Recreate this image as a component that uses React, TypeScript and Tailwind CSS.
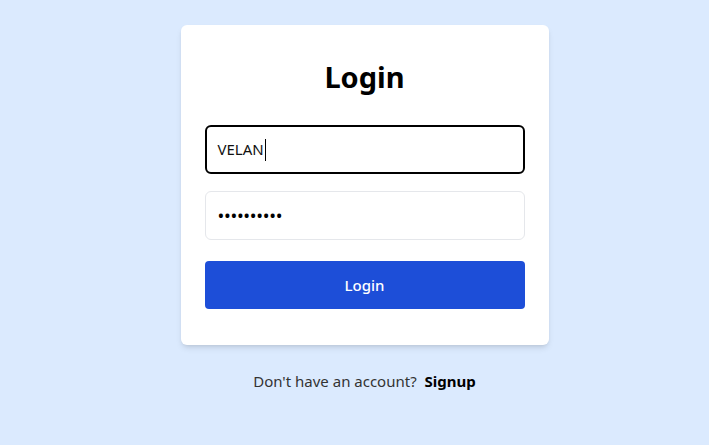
import React from "react";

export default function App() {
  return (
    <div className="min-h-[445px] w-full bg-[#dbeafe] flex flex-col items-center pt-[25px] pl-[20px]" style={{ fontFamily: '"Segoe UI", "Noto Sans", sans-serif' }}>
      <div className="w-[368px] bg-white rounded-md shadow-md px-6 pt-[40px] pb-[36px]">
        <h1 className="text-[29px] leading-[24px] font-bold text-center text-black mb-[36px]">Login</h1>
        <div className="h-[49px] rounded-md border-2 border-black flex items-center pl-[11px] text-[15px] text-[#111]">
          <span>VELAN</span>
          <span className="w-px h-[22px] bg-black ml-[1px]"></span>
        </div>
        <div className="h-[49px] mt-[17px] rounded-md border border-gray-200 flex items-center pl-[12px] text-[18px] text-black tracking-[-0.3px]">
          ••••••••••
        </div>
        <button className="mt-[21px] h-[48px] w-full rounded bg-[#1d4ed8] text-white text-[15px] font-medium">Login</button>
      </div>
      <div className="mt-[25px] text-[15px] text-[#333]">
        Don't have an account? <span className="font-bold text-black ml-1">Signup</span>
      </div>
    </div>
  );
}
